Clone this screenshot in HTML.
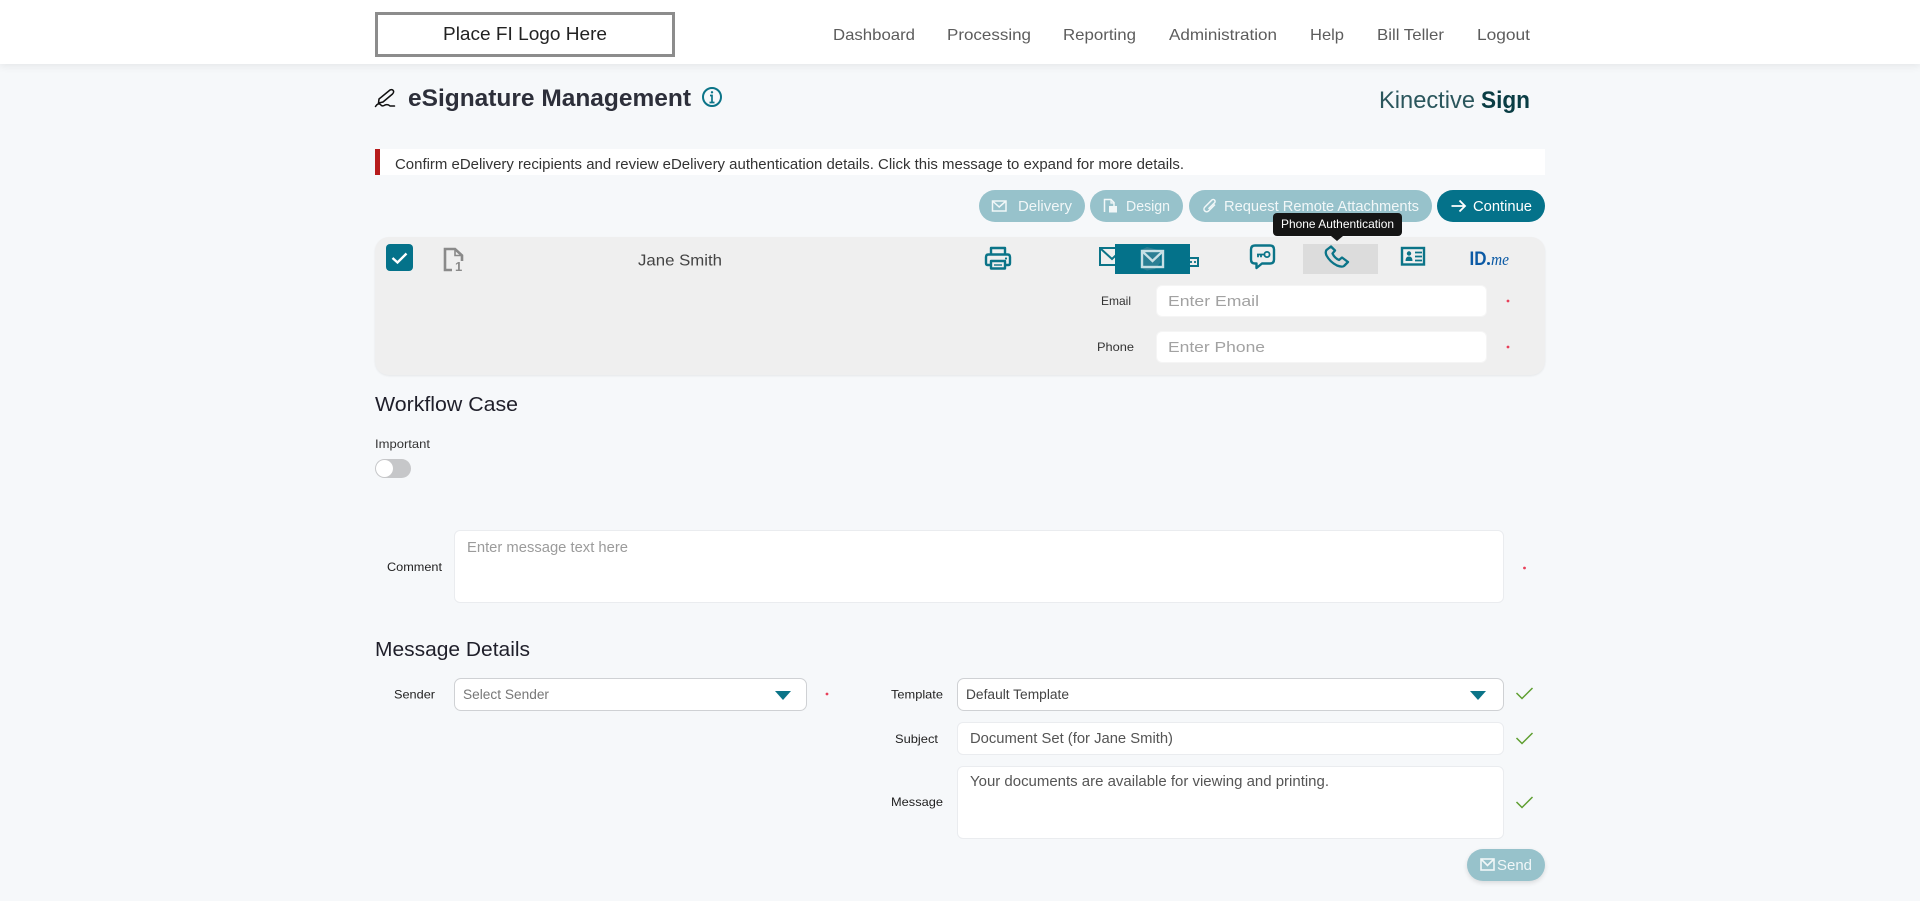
<!DOCTYPE html>
<html lang="en">
<head>
<meta charset="utf-8">
<title>eSignature Management</title>
<style>
html,body{margin:0;padding:0;width:1920px;height:901px;overflow:hidden;background:#f6f8fa;font-family:"Liberation Sans",sans-serif}
.b{position:absolute;box-sizing:border-box}
.hdr{left:0;top:0;width:1920px;height:64px;background:#fff;box-shadow:0 2px 8px rgba(0,0,0,.08)}
.logo{left:375px;top:12px;width:300px;height:45px;border:3px solid #8c8c8c;background:#fff}
.alert{left:375px;top:149px;width:1170px;height:26px;background:#fff;border-left:5px solid #b71c1c;background-clip:border-box}
.btn{top:190px;height:32px;border-radius:16px;background:#97c2cb}
.panel{left:375px;top:237px;width:1170px;height:138px;background:#efefef;border-radius:14px;box-shadow:0 1px 2px rgba(0,0,0,.07)}
.inp{background:#fff;border:1px solid #eaecef;border-radius:6px}
.sel{background:#fff;border:1px solid #cfd1d4;border-radius:7px}
svg.layer{position:absolute;left:0;top:0}
text{font-family:"Liberation Sans",sans-serif}
</style>
</head>
<body>
<div class="b hdr"></div>
<div class="b logo"></div>
<div class="b alert"></div>
<div class="b btn" style="left:979px;width:106px"></div>
<div class="b btn" style="left:1090px;width:93px"></div>
<div class="b btn" style="left:1189px;width:243px"></div>
<div class="b btn" style="left:1437px;width:108px;background:#04728a"></div>
<div class="b panel"></div>
<div class="b" style="left:1303px;top:244px;width:75px;height:30px;background:#dcdcdc"></div>
<div class="b inp" style="left:1156px;top:285px;width:331px;height:32px;border-color:#f5f5f5"></div>
<div class="b inp" style="left:1156px;top:331px;width:331px;height:32px;border-color:#f5f5f5"></div>
<div class="b" style="left:375px;top:459px;width:36px;height:19px;border-radius:10px;background:#c6c7c9"></div>
<div class="b" style="left:376px;top:460px;width:17px;height:17px;border-radius:50%;background:#fff"></div>
<div class="b inp" style="left:454px;top:530px;width:1050px;height:73px"></div>
<div class="b sel" style="left:454px;top:678px;width:353px;height:33px"></div>
<div class="b sel" style="left:957px;top:678px;width:547px;height:33px"></div>
<div class="b inp" style="left:957px;top:722px;width:547px;height:33px"></div>
<div class="b inp" style="left:957px;top:766px;width:547px;height:73px"></div>
<div class="b" style="left:1467px;top:849px;width:78px;height:32px;border-radius:16px;background:#97c2cb;box-shadow:0 2px 5px rgba(0,0,0,.12)"></div>

<svg class="layer" width="1920" height="901" viewBox="0 0 1920 901" xmlns="http://www.w3.org/2000/svg">
  <!-- header -->
  <text x="443" y="40" font-size="18" fill="#222" lengthAdjust="spacingAndGlyphs" textLength="164">Place FI Logo Here</text>
  <g font-size="16" fill="#5c5c5c">
    <text x="833" y="40" lengthAdjust="spacingAndGlyphs" textLength="82">Dashboard</text>
    <text x="947" y="40" lengthAdjust="spacingAndGlyphs" textLength="84">Processing</text>
    <text x="1063" y="40" lengthAdjust="spacingAndGlyphs" textLength="73">Reporting</text>
    <text x="1169" y="40" lengthAdjust="spacingAndGlyphs" textLength="108">Administration</text>
    <text x="1310" y="40" lengthAdjust="spacingAndGlyphs" textLength="34">Help</text>
    <text x="1377" y="40" lengthAdjust="spacingAndGlyphs" textLength="67">Bill Teller</text>
    <text x="1477" y="40" lengthAdjust="spacingAndGlyphs" textLength="53">Logout</text>
  </g>

  <!-- title -->
  <g fill="none" stroke="#111" stroke-width="1.5" stroke-linecap="round" stroke-linejoin="round">
    <path d="M379 99 L390 90 Q392.5 89 393.5 91 Q394 92.5 392.5 94 L383 102 L378.5 103 Z"/>
    <path d="M375.5 106.5 Q378 102.5 380.5 104.5 Q382 107 385 105 Q388 104 390 106 L394.5 106"/>
  </g>
  <text x="408" y="106" font-size="24.5" font-weight="700" fill="#2d2f3a" lengthAdjust="spacingAndGlyphs" textLength="283">eSignature Management</text>
  <g fill="none" stroke="#0b7488" stroke-width="2">
    <circle cx="712" cy="97" r="9"/>
    <path d="M709.5 102.5 H714.5 M712 102.5 V95.5 H710" stroke-width="1.7"/>
  </g>
  <circle cx="712" cy="92.3" r="1.2" fill="#0b7488"/>
  <text x="1379" y="108" font-size="24" fill="#2a565c" lengthAdjust="spacingAndGlyphs" textLength="96">Kinective</text>
  <text x="1481" y="108" font-size="24" font-weight="700" fill="#0a3d44" lengthAdjust="spacingAndGlyphs" textLength="49">Sign</text>

  <!-- alert -->
  <text x="395" y="169" font-size="14.5" fill="#333" lengthAdjust="spacingAndGlyphs" textLength="789">Confirm eDelivery recipients and review eDelivery authentication details. Click this message to expand for more details.</text>

  <!-- buttons -->
  <g fill="none" stroke="#f1f7f8" stroke-width="1.5">
    <rect x="992.5" y="201" width="13.5" height="10"/>
    <path d="M993 201.5 L999.2 207 L1005.5 201.5"/>
    <path d="M1104.5 212 V199.5 H1111 L1114 202.5 V206"/>
    <path d="M1111 199.5 V203 H1114" stroke-width="1.2"/>
    <path transform="rotate(45 1210 206)" d="M1212.5 201.5 V210.5 a2.7 2.7 0 0 1 -5.4 0 V200.5 a1.9 1.9 0 0 1 3.8 0 V209" stroke-width="1.5"/>
    <path d="M1451.5 206 H1465 M1459.5 200.5 L1465 206 L1459.5 211.5" stroke="#fff" stroke-width="1.8"/>
  </g>
  <rect x="1109" y="206" width="8" height="6.5" fill="#f1f7f8"/>
  <g font-size="14.5" fill="#f1f7f8">
    <text x="1018" y="211" lengthAdjust="spacingAndGlyphs" textLength="54">Delivery</text>
    <text x="1126" y="211" lengthAdjust="spacingAndGlyphs" textLength="44">Design</text>
    <text x="1224" y="211" lengthAdjust="spacingAndGlyphs" textLength="195">Request Remote Attachments</text>
    <text x="1473" y="211" lengthAdjust="spacingAndGlyphs" textLength="59" fill="#fff">Continue</text>
  </g>

  <!-- recipient row -->
  <rect x="386" y="244" width="27" height="27" rx="4" fill="#04728a"/>
  <path d="M392.5 258 L397.5 262.5 L406.5 253.5" fill="none" stroke="#fff" stroke-width="2.4"/>
  <g fill="none" stroke="#8a8a8a" stroke-width="2.6">
    <path d="M452 270 H445 V249 H455 L462 255.5 V261"/>
    <path d="M455 249 V255.5 H462" stroke-width="1.6"/>
  </g>
  <text x="455" y="271" font-size="13" font-weight="700" fill="#8a8a8a">1</text>
  <text x="638" y="265.5" font-size="16" fill="#444" lengthAdjust="spacingAndGlyphs" textLength="84">Jane Smith</text>

  <!-- printer -->
  <g fill="none" stroke="#0b7488" stroke-width="2.4" stroke-linejoin="round">
    <path d="M991 254 V248 H1005 V254"/>
    <path d="M991 265 H987.5 Q986 265 986 263 V257 Q986 254.5 988.5 254.5 H1007.5 Q1010 254.5 1010 257 V263 Q1010 265 1008.5 265 H1005"/>
    <rect x="991" y="261" width="14" height="7.5"/>
    <path d="M994 265 H1002" stroke-width="1.4"/>
  </g>
  <circle cx="1006" cy="258.5" r="1.1" fill="#0b7488"/>

  <!-- mail and device partly hidden -->
  <g fill="none" stroke="#0b7488" stroke-width="2">
    <rect x="1100" y="248" width="24" height="17"/>
    <path d="M1100.5 248.5 L1112 259 L1123 248.5"/>
    <rect x="1182" y="258" width="16" height="8"/>
  </g>
  <circle cx="1191" cy="262" r="1.1" fill="#0b7488"/><circle cx="1195" cy="262" r="1.1" fill="#0b7488"/>
  <rect x="1115" y="244" width="75" height="30" fill="#04728a"/>
  <path d="M1147 247 L1158 250 L1161 262 L1155 269 L1147 270.5 L1141 268 L1141 250 Z" fill="#2b7f94"/>
  <g fill="none" stroke="#c7e0e5" stroke-width="2.4">
    <rect x="1142" y="251" width="21" height="16"/>
    <path d="M1142.5 251.5 L1152.5 261 L1162.5 251.5"/>
  </g>

  <!-- chat key -->
  <g fill="none" stroke="#0b7488" stroke-width="2.4" stroke-linejoin="round">
    <path d="M1255 245.5 H1270 Q1274 245.5 1274 249.5 V259.5 Q1274 263.5 1270 263.5 H1262 L1256.5 268 V263.5 H1255 Q1251 263.5 1251 259.5 V249.5 Q1251 245.5 1255 245.5 Z"/>
  </g>
  <circle cx="1267" cy="254.5" r="2.6" fill="none" stroke="#0b7488" stroke-width="1.8"/>
  <path d="M1257 254.5 H1264.5 M1258 254.5 V257.2 M1261 254.5 V257.2" stroke="#0b7488" stroke-width="1.8" fill="none"/>

  <!-- phone -->
  <path d="M1331 246.5 L1326.5 250 Q1325 252 1326.5 255.5 Q1330 262 1337 265.5 Q1342 267.5 1344 266 L1348 262 L1342 257.5 L1339 260 Q1334.5 258 1332.5 253.5 L1335 250.5 Z" fill="none" stroke="#0b7488" stroke-width="2.3" stroke-linejoin="round"/>

  <!-- id card -->
  <rect x="1402" y="248" width="22" height="16.5" fill="none" stroke="#0b7488" stroke-width="2.4"/>
  <circle cx="1409" cy="253.5" r="2.2" fill="#0b7488"/>
  <path d="M1405.5 261 Q1405.5 256.5 1409 256.5 Q1412.5 256.5 1412.5 261 Z" fill="#0b7488"/>
  <path d="M1415 252.5 H1422 M1415 256.5 H1422 M1415 260.5 H1422" stroke="#0b7488" stroke-width="1.7"/>

  <!-- id.me -->
  <text x="1469.5" y="265" font-size="19.5" font-weight="700" fill="#0b5aa5" lengthAdjust="spacingAndGlyphs" textLength="17">ID</text>
  <circle cx="1488.5" cy="263.5" r="1.5" fill="#0b5aa5"/>
  <text x="1491" y="265" font-size="17" font-style="italic" fill="#0b5aa5" style="font-family:'Liberation Serif',serif" lengthAdjust="spacingAndGlyphs" textLength="18">me</text>

  <!-- tooltip -->
  <rect x="1273" y="213" width="129" height="23" rx="4" fill="#151515"/>
  <path d="M1331 236 H1343 L1337 241 Z" fill="#151515"/>
  <text x="1281" y="228" font-size="12" fill="#fff" lengthAdjust="spacingAndGlyphs" textLength="113">Phone Authentication</text>

  <!-- fields in panel -->
  <g font-size="12" fill="#333">
    <text x="1101" y="305" lengthAdjust="spacingAndGlyphs" textLength="30">Email</text>
    <text x="1097" y="351" lengthAdjust="spacingAndGlyphs" textLength="37">Phone</text>
  </g>
  <g font-size="14.5" fill="#a2a2a2">
    <text x="1168" y="306" lengthAdjust="spacingAndGlyphs" textLength="91">Enter Email</text>
    <text x="1168" y="352" lengthAdjust="spacingAndGlyphs" textLength="97">Enter Phone</text>
  </g>
  <circle cx="1508" cy="301" r="1.4" fill="#e8405a"/>
  <circle cx="1508" cy="347" r="1.4" fill="#e8405a"/>

  <!-- workflow -->
  <text x="375" y="411" font-size="20" fill="#1f1f2a" lengthAdjust="spacingAndGlyphs" textLength="143">Workflow Case</text>
  <text x="375" y="448" font-size="12" fill="#333" lengthAdjust="spacingAndGlyphs" textLength="55">Important</text>
  <text x="387" y="571" font-size="12" fill="#222" lengthAdjust="spacingAndGlyphs" textLength="55">Comment</text>
  <text x="467" y="552" font-size="14.5" fill="#9b9b9b" lengthAdjust="spacingAndGlyphs" textLength="161">Enter message text here</text>
  <circle cx="1524.5" cy="568" r="1.4" fill="#e8405a"/>

  <!-- message details -->
  <text x="375" y="656" font-size="20" fill="#1f1f2a" lengthAdjust="spacingAndGlyphs" textLength="155">Message Details</text>
  <g font-size="12" fill="#222">
    <text x="394" y="698.5" lengthAdjust="spacingAndGlyphs" textLength="41">Sender</text>
    <text x="891" y="698.5" lengthAdjust="spacingAndGlyphs" textLength="52">Template</text>
    <text x="895" y="743" lengthAdjust="spacingAndGlyphs" textLength="43">Subject</text>
    <text x="891" y="806" lengthAdjust="spacingAndGlyphs" textLength="52">Message</text>
  </g>
  <text x="463" y="699" font-size="13.5" fill="#777" lengthAdjust="spacingAndGlyphs" textLength="86">Select Sender</text>
  <text x="966" y="699" font-size="13.5" fill="#444" lengthAdjust="spacingAndGlyphs" textLength="103">Default Template</text>
  <text x="970" y="743" font-size="14.5" fill="#555" lengthAdjust="spacingAndGlyphs" textLength="203">Document Set (for Jane Smith)</text>
  <text x="970" y="786" font-size="14.5" fill="#555" lengthAdjust="spacingAndGlyphs" textLength="359">Your documents are available for viewing and printing.</text>
  <path d="M775 691 H791 L783 700 Z" fill="#0b7488"/>
  <path d="M1470 691 H1486 L1478 700 Z" fill="#0b7488"/>
  <circle cx="827" cy="694" r="1.4" fill="#e8405a"/>
  <g fill="none" stroke="#5e9e2f" stroke-width="1.5">
    <path d="M1516.5 693 L1522 698.5 L1532.5 688"/>
    <path d="M1516.5 738 L1522 743.5 L1532.5 733"/>
    <path d="M1516.5 802 L1522 807.5 L1532.5 797"/>
  </g>

  <!-- send -->
  <g fill="none" stroke="#f1f7f8" stroke-width="1.6">
    <rect x="1481" y="859" width="13" height="11"/>
    <path d="M1481.5 859.5 L1487.5 865.5 L1493.5 859.5"/>
  </g>
  <text x="1497" y="870" font-size="14.5" fill="#f1f7f8" lengthAdjust="spacingAndGlyphs" textLength="35">Send</text>
</svg>
</body>
</html>
